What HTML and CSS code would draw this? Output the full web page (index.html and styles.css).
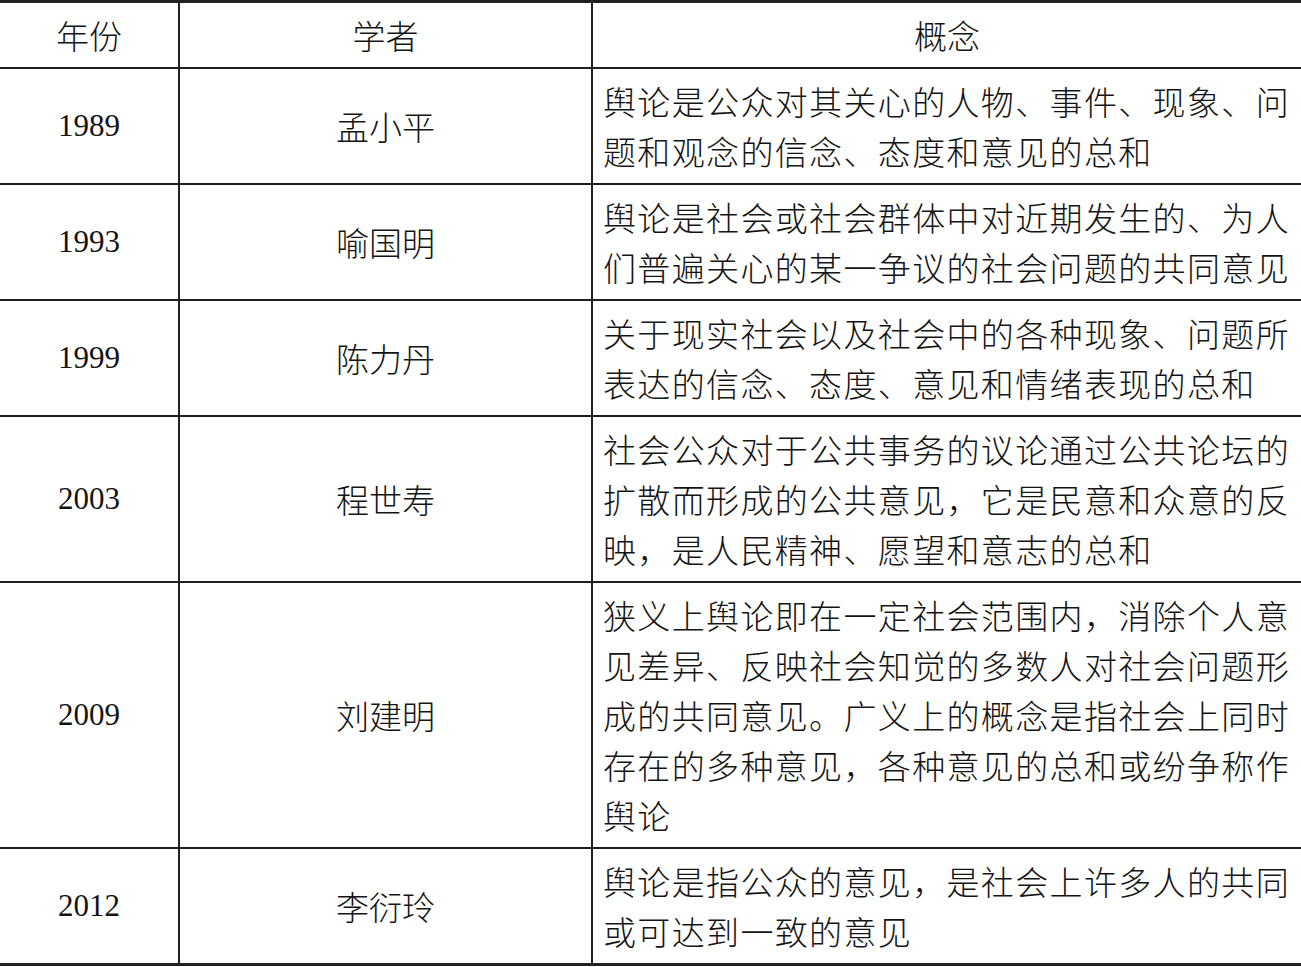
FILE: index.html
```html
<!DOCTYPE html>
<html lang="zh-CN">
<head>
<meta charset="utf-8">
<title>舆论概念</title>
<link rel="stylesheet" href="styles.css">
</head>
<body>
<table class="concepts">
  <colgroup>
    <col class="c-year">
    <col class="c-name">
    <col class="c-def">
  </colgroup>
  <thead>
    <tr>
      <th class="year-h">年份</th>
      <th class="name">学者</th>
      <th class="name">概念</th>
    </tr>
  </thead>
  <tbody>
    <tr>
      <td class="year">1989</td>
      <td class="name">孟小平</td>
      <td class="def">舆论是公众对其关心的人物、事件、现象、问题和观念的信念、态度和意见的总和</td>
    </tr>
    <tr>
      <td class="year">1993</td>
      <td class="name">喻国明</td>
      <td class="def">舆论是社会或社会群体中对近期发生的、为人们普遍关心的某一争议的社会问题的共同意见</td>
    </tr>
    <tr>
      <td class="year">1999</td>
      <td class="name">陈力丹</td>
      <td class="def">关于现实社会以及社会中的各种现象、问题所表达的信念、态度、意见和情绪表现的总和</td>
    </tr>
    <tr>
      <td class="year">2003</td>
      <td class="name">程世寿</td>
      <td class="def">社会公众对于公共事务的议论通过公共论坛的扩散而形成的公共意见，它是民意和众意的反映，是人民精神、愿望和意志的总和</td>
    </tr>
    <tr>
      <td class="year">2009</td>
      <td class="name">刘建明</td>
      <td class="def">狭义上舆论即在一定社会范围内，消除个人意见差异、反映社会知觉的多数人对社会问题形成的共同意见。广义上的概念是指社会上同时存在的多种意见，各种意见的总和或纷争称作舆论</td>
    </tr>
    <tr class="last">
      <td class="year">2012</td>
      <td class="name">李衍玲</td>
      <td class="def">舆论是指公众的意见，是社会上许多人的共同或可达到一致的意见</td>
    </tr>
  </tbody>
</table>
</body>
</html>
```

FILE: styles.css
```css
html, body {
  margin: 0;
  padding: 0;
  background: #ffffff;
}

.concepts {
  width: 1301px;
  border-collapse: collapse;
  table-layout: fixed;
  color: #141414;
  font-family: "Noto Sans CJK SC", "Noto Sans", sans-serif;
  font-size: 33px;
  font-weight: 300;
  line-height: 50px;
}

.c-year { width: 179px; }
.c-name { width: 413px; }
.c-def { width: 709px; }

.concepts th,
.concepts td {
  border: 2px solid #231f20;
  padding: 7px 6px;
  vertical-align: middle;
  font-weight: 300;
}

.concepts tr > :first-child { border-left: none; }
.concepts tr > :last-child { border-right: none; }

.concepts thead th { border-top: 3px solid #231f20; }
.concepts tr.last td { border-bottom: 3px solid #231f20; }

.concepts .year-h,
.concepts .name {
  text-align: center;
}

.concepts td.year {
  text-align: center;
  font-family: "Liberation Serif", "Times New Roman", serif;
  font-size: 31px;
  font-weight: 400;
}

.concepts td.def {
  text-align: left;
  padding-left: 10px;
  padding-right: 0;
  letter-spacing: 1.35px;
}
```
